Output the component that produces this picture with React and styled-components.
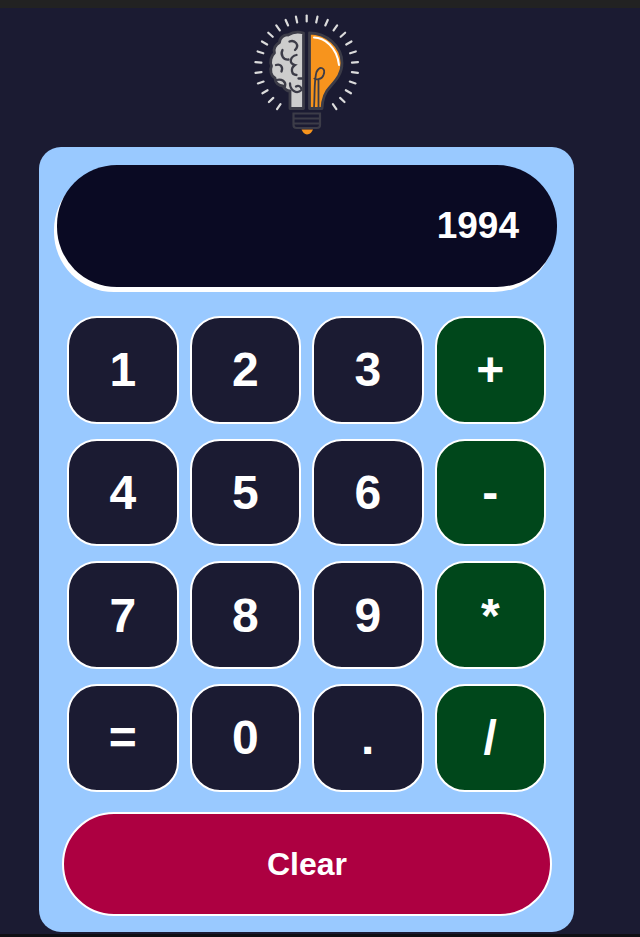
import React, { useState } from 'react';
import styled, { createGlobalStyle } from 'styled-components';

const GlobalStyle = createGlobalStyle`
  body, html {
    margin: 0;
    padding: 0;
    width: 100%;
    height: 100%;
    background-color: #1b1b32;
    font-family: "Liberation Sans", Arial, sans-serif;
  }
`;

const Page = styled.div`
  width: 640px;
  height: 937px;
  overflow: hidden;
  box-sizing: border-box;
  background-color: #1b1b32;
  border-top: 8px solid #222222;
  border-bottom: 3px solid #0f0f14;
  display: flex;
  flex-direction: column;
  padding-left: 39px;
`;

const LogoRow = styled.div`
  width: 535px;
  height: 139px;
  display: flex;
  justify-content: center;
  flex-shrink: 0;
`;

const Panel = styled.div`
  width: 535px;
  height: 785px;
  box-sizing: border-box;
  background-color: #99c9ff;
  border-radius: 22px;
  padding: 18px 17px 17px 18px;
  display: flex;
  flex-direction: column;
`;

const Display = styled.div`
  width: 500px;
  height: 122px;
  flex-shrink: 0;
  box-sizing: border-box;
  background-color: #0a0a23;
  border-radius: 60px;
  box-shadow: -3px 5px 0 #ffffff;
  color: #ffffff;
  font-size: 37px;
  font-weight: bold;
  display: flex;
  align-items: center;
  justify-content: flex-end;
  padding-right: 38px;
`;

const Keys = styled.div`
  display: grid;
  grid-template-columns: repeat(4, 111.5px);
  grid-auto-rows: 107.5px;
  column-gap: 11px;
  row-gap: 15.2px;
  margin: 29px 0 0 10px;
`;

const Key = styled.button`
  box-sizing: border-box;
  border: 2px solid #ffffff;
  border-radius: 30px;
  background-color: ${(p) => (p.$op ? '#00471b' : '#1b1b32')};
  color: #ffffff;
  font-family: inherit;
  font-size: 48px;
  font-weight: bold;
  padding: 0;
  cursor: pointer;
`;

const ClearButton = styled.button`
  width: 490px;
  height: 104px;
  flex-shrink: 0;
  box-sizing: border-box;
  margin: 20.5px 0 0 5px;
  border: 2px solid #ffffff;
  border-radius: 52px;
  background-color: #ad0041;
  color: #ffffff;
  font-family: inherit;
  font-size: 32px;
  font-weight: bold;
  padding: 0;
  cursor: pointer;
`;

const INK = '#3c3c48';

const Logo = () => {
  const rays = [];
  for (let i = -12; i <= 12; i++) {
    const a = i * 12.07;
    rays.push(
      <line key={i} x1="66.7" y1="21.5" x2="66.7" y2="15.5" transform={`rotate(${a} 66.7 67)`} />
    );
  }
  return (
    <svg width="133" height="131" viewBox="0 8 133 131">
      <g stroke="#dcdcdc" strokeWidth="2.2" strokeLinecap="round">{rays}</g>
      <path
        d="M63.5 33 C58 31.5 52 32.5 48 35 C44 34.5 39.5 38 39.5 42.5 C35.5 44.5 33 49 34.5 53 C31 56 29.5 62 31.5 66 C29.5 70 31 76 35 78 C35 83 39 86 43 86 C45 90 48 91 50 91 L50 108.5 L63.5 108.5 Z"
        fill="#cdcdcd"
        stroke={INK}
        strokeWidth="2.8"
        strokeLinejoin="round"
      />
      <g fill="none" stroke={INK} strokeWidth="2.3" strokeLinecap="round">
        <path d="M49.5 41.5 C55 39.5 60 45 55 50" />
        <path d="M42.5 50 C40 55 43.5 60 48.5 59.5" />
        <path d="M56.5 55 C50 56.5 48.5 63.5 55 65 C50 68.5 51.5 75 56.5 75" />
        <path d="M36 65 C40 63.5 43.5 66.5 41.5 71.5" />
        <path d="M36.5 80 C41.5 78.5 46.5 81.5 45 86.5" />
        <path d="M50 83.5 C50 90 56.5 95 61.5 90 C61.5 86.5 58.5 85 56 86.5" />
        <path d="M58.5 78.5 L63 78.5" />
      </g>
      <path
        d="M69.5 33 C86 33 102 46 102 63 C102 74 96 80 90 87 C85 92 82.5 98 82 108.5 L69.5 108.5 Z"
        fill="#f7941d"
        stroke={INK}
        strokeWidth="2.8"
        strokeLinejoin="round"
      />
      <path d="M74 37.5 C84 37.5 97 47 99 65" fill="none" stroke="#ffffff" strokeWidth="2" strokeLinecap="round" />
      <path
        d="M74 108 C75 93 74 80 76.5 72 C80 65 86 68 83.5 75 C82 80 75 80 74 78 M78.5 108 L78.5 80"
        fill="none"
        stroke={INK}
        strokeWidth="1.8"
      />
      <path d="M53.5 113.5 H80 V125 Q80 128 77 128 H56.5 Q53.5 128 53.5 125 Z" fill="#1b1b32" stroke={INK} strokeWidth="2.2" />
      <path d="M53.5 118.5 H80 M53.5 123.5 H80" stroke={INK} strokeWidth="2.2" />
      <path d="M61.5 129.5 H73 C72 132 70 134.5 67 134.5 C64.5 134.5 62.5 132 61.5 129.5 Z" fill="#f7941d" />
    </svg>
  );
};

const KEYS = ['1', '2', '3', '+', '4', '5', '6', '-', '7', '8', '9', '*', '=', '0', '.', '/'];
const OPS = ['+', '-', '*', '/'];

const App = () => {
  const [value, setValue] = useState('1994');

  const handleKey = (k) => {
    if (k === '=') {
      return;
    }
    setValue(value + k);
  };

  return (
    <Page>
      <GlobalStyle />
      <LogoRow>
        <Logo />
      </LogoRow>
      <Panel>
        <Display>{value}</Display>
        <Keys>
          {KEYS.map((k) => (
            <Key key={k} $op={OPS.includes(k)} onClick={() => handleKey(k)}>
              {k}
            </Key>
          ))}
        </Keys>
        <ClearButton onClick={() => setValue('')}>Clear</ClearButton>
      </Panel>
    </Page>
  );
};

export default App;
